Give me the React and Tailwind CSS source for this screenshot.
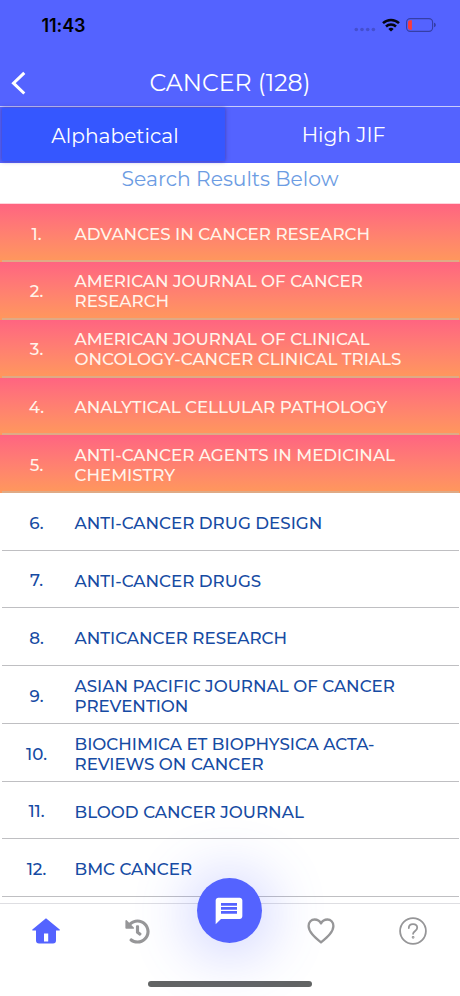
import { FaHistory } from "react-icons/fa";
import { MdMessage } from "react-icons/md";

const journals = [
  { hot: true, lines: ["ADVANCES IN CANCER RESEARCH"] },
  { hot: true, lines: ["AMERICAN JOURNAL OF CANCER", "RESEARCH"] },
  { hot: true, lines: ["AMERICAN JOURNAL OF CLINICAL", "ONCOLOGY-CANCER CLINICAL TRIALS"] },
  { hot: true, lines: ["ANALYTICAL CELLULAR PATHOLOGY"] },
  { hot: true, lines: ["ANTI-CANCER AGENTS IN MEDICINAL", "CHEMISTRY"] },
  { lines: ["ANTI-CANCER DRUG DESIGN"] },
  { lines: ["ANTI-CANCER DRUGS"] },
  { lines: ["ANTICANCER RESEARCH"] },
  { lines: ["ASIAN PACIFIC JOURNAL OF CANCER", "PREVENTION"] },
  { lines: ["BIOCHIMICA ET BIOPHYSICA ACTA-", "REVIEWS ON CANCER"] },
  { lines: ["BLOOD CANCER JOURNAL"] },
  { lines: ["BMC CANCER"] },
];

function StatusBar() {
  return (
    <div className="flex h-[60px] items-start justify-between pl-[41.5px] pr-[24px] pt-[13px]">
      <span className="font-['Inter',sans-serif] text-[18px] font-semibold leading-[26px] tracking-[-0.1px] text-black">11:43</span>
      <div className="flex items-center pt-[5px]">
        <svg width="22" height="5" viewBox="0 0 22 5" className="mr-[6px] mt-[9px]" fill="#444fcf">
          <circle cx="2.3" cy="2.5" r="1.8" />
          <circle cx="8" cy="2.5" r="1.8" />
          <circle cx="13.7" cy="2.5" r="1.8" />
          <circle cx="19.4" cy="2.5" r="1.8" />
        </svg>
        <svg width="18" height="14" viewBox="0 0 18 14" className="mr-[6px]" fill="none" stroke="#05060f" strokeWidth="2.5">
          <path d="M1 5.2a11.6 11.6 0 0 1 16 0" />
          <path d="M4 8.5a7.3 7.3 0 0 1 10 0" />
          <path d="M6.3 10.9a4 4 0 0 1 5.4 0L9 13.6z" fill="#05060f" stroke="none" />
        </svg>
        <svg width="30" height="14" viewBox="0 0 30 14">
          <rect x="0.6" y="0.6" width="26" height="12.8" rx="3.6" fill="none" stroke="#353ea6" strokeWidth="1.1" />
          <path d="M4 2.2h1.9v9.6H4a2 2 0 0 1-2-2V4.2a2 2 0 0 1 2-2z" fill="#fb3b3c" />
          <path d="M28 4.8c1.4.4 1.8 1.2 1.8 2.2s-.4 1.8-1.8 2.2z" fill="#353ea6" />
        </svg>
      </div>
    </div>
  );
}

function JournalRow({ index, journal }) {
  return (
    <li
      className={
        journal.hot
          ? "flex h-[57.75px] flex-col bg-gradient-to-b from-[#ff6481] to-[#ff985b] text-[#fff4ea]"
          : "flex h-[57.75px] flex-col bg-white text-[#164ba3]"
      }
    >
      <div className="flex flex-1 items-center pt-[3px] text-[16.7px] font-medium">
        <span className="w-[73px] shrink-0 pt-[1px] text-center">{index}.</span>
        <div className="pl-[1.5px] leading-[20px]">
          {journal.lines.map((text) => (
            <div key={text} className="whitespace-nowrap">{text}</div>
          ))}
        </div>
      </div>
      <div className={journal.hot ? "mx-[1.5px] h-[2px] bg-[#dfaa85]" : "mx-[1.5px] mb-[0.25px] h-px bg-[#bfbfc2]"} />
    </li>
  );
}

function TabItem({ children }) {
  return <div className="flex flex-1 items-center justify-center">{children}</div>;
}

function TabBar() {
  return (
    <nav className="relative flex h-[93px] flex-col border-t border-[#dedee2] bg-white">
      <div className="absolute left-[196.5px] top-[-26px] h-[65px] w-[65px] rounded-full shadow-[0_4px_60px_6px_rgba(84,99,255,0.33)]" />
      <div className="relative flex h-[54px] pr-px">
        <TabItem>
          <svg width="28" height="26" viewBox="0 0 28 26" fill="#5463ff">
            <path d="M14 .2 27.7 11.5q.5.6-.2 1.1H24v9.8a3 3 0 0 1-3 3H7a3 3 0 0 1-3-3v-9.8H.6Q-.1 12 .4 11.4z" />
            <rect x="12" y="15.5" width="4.2" height="8" fill="#fff" />
          </svg>
        </TabItem>
        <TabItem>
          <FaHistory className="size-[25px] text-[#969698]" />
        </TabItem>
        <TabItem />
        <TabItem>
          <svg width="28" height="26" viewBox="0 0 28 26" fill="none" stroke="#969698" strokeWidth="2.3" strokeLinejoin="round">
            <path d="M14 24.4C7.5 18.8 1.6 13.8 1.6 7.9c0-3.7 2.7-6.4 6-6.4 2.8 0 5.1 1.4 6.4 3.9 1.3-2.5 3.6-3.9 6.4-3.9 3.3 0 6 2.7 6 6.4 0 5.9-5.9 10.9-12.4 16.5z" />
          </svg>
        </TabItem>
        <TabItem>
          <svg width="28" height="28" viewBox="0 0 28 28" fill="none" stroke="#969698" strokeWidth="1.8" strokeLinecap="round">
            <circle cx="14" cy="14" r="12.9" />
            <path d="M9.8 11c0-2.4 1.8-3.8 4.2-3.8s4.2 1.5 4.2 3.6c0 3-4 3.2-4.1 6" />
            <circle cx="14.1" cy="20.3" r="0.5" />
          </svg>
        </TabItem>
      </div>
      <button className="absolute left-[196.5px] top-[-26px] flex h-[65px] w-[65px] items-center justify-center rounded-full bg-[#5463ff]">
        <MdMessage className="size-[32px] text-white" />
      </button>
      <div className="mx-auto mt-[23px] h-[6px] w-[164px] rounded-full bg-[#626464]" />
    </nav>
  );
}

export default function App() {
  return (
    <div className="flex h-[996px] w-[460px] flex-col overflow-hidden bg-white font-['Montserrat','Inter',sans-serif]">
      <header className="bg-[#5463ff] text-white">
        <StatusBar />
        <div className="flex h-[46px] items-center">
          <svg width="16" height="24" viewBox="0 0 16 24" className="ml-[10px] w-[16px]" fill="none" stroke="white" strokeWidth="3">
            <path d="M14.3 1.8 3.5 12.2 14.3 22.5" />
          </svg>
          <h1 className="flex-1 pr-[26px] text-center text-[23.6px]">CANCER (128)</h1>
        </div>
        <div className="h-px bg-[#c9cdfa]" />
        <div className="flex h-[55.5px]">
          <button className="w-[229px] pb-[1.5px] pl-[2px] pr-[4px] pt-px">
            <div className="flex h-full items-center justify-center bg-[#3557ff] pl-[3px] pt-[3px] text-[20.2px] shadow-[0_0_4px_rgba(60,50,150,0.8)]">
              Alphabetical
            </div>
          </button>
          <button className="flex-1 pr-[2px] text-center text-[20.2px]">High JIF</button>
        </div>
      </header>
      <h2 className="h-[40.75px] pt-[1px] text-center text-[20.3px] leading-[30px] text-[#6c9ce3]">
        Search Results Below
      </h2>
      <ul className="h-[699.75px] shrink-0 overflow-hidden border-t border-[#ffd5dc]">
        {journals.map((journal, i) => (
          <JournalRow key={i} index={i + 1} journal={journal} />
        ))}
      </ul>
      <TabBar />
    </div>
  );
}
